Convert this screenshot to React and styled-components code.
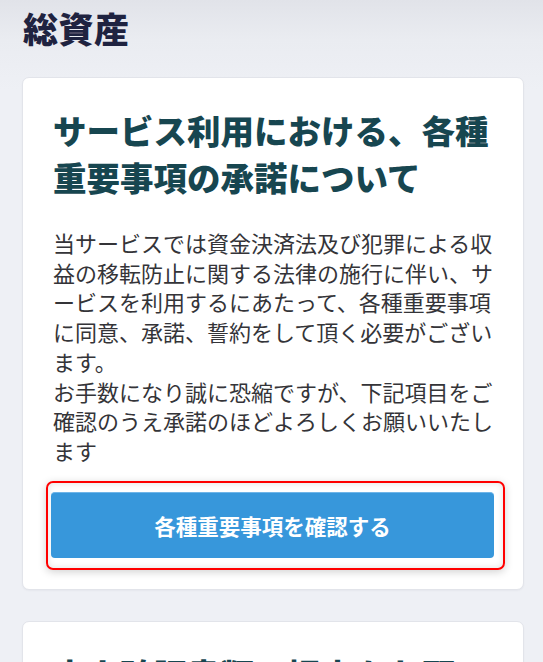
import React from 'react';
import styled, { createGlobalStyle } from 'styled-components';

const GlobalStyle = createGlobalStyle`
  html, body {
    margin: 0;
    padding: 0;
  }
  body {
    background: linear-gradient(#e1e3e9 0, #eaecf1 40px, #eef0f5 90px) #eef0f5;
    font-family: "Noto Sans CJK JP", "Noto Sans", sans-serif;
    min-height: 662px;
    overflow: hidden;
  }
`;

const Page = styled.div`
  padding: 7px 19px 0 22px;
`;

const PageTitle = styled.h1`
  margin: 0 0 28px 1px;
  font-size: 35px;
  line-height: 42px;
  font-weight: 900;
  color: #1f2340;
  letter-spacing: 0.5px;
`;

const Card = styled.section`
  background: #fff;
  border: 1px solid #e2e4ea;
  border-radius: 7px;
  box-shadow: 0 1px 2px rgba(30, 35, 60, 0.04);
  padding: 28px 30px 19px 30px;
  margin-bottom: 31px;
`;

const CardTitle = styled.h2`
  margin: 0 0 28px;
  font-size: 33.5px;
  line-height: 47px;
  font-weight: 900;
  color: #174650;
`;

const Body = styled.p`
  margin: 0 0 15px;
  font-size: 22px;
  line-height: 29.7px;
  color: #343438;
  white-space: pre-line;
`;

const FocusRing = styled.div`
  margin-left: -7px;
  margin-right: -12px;
  padding: 9px 9px 10px 3px;
  border: 2px solid #ff0000;
  border-radius: 7px;
  box-shadow: 0 2px 8px rgba(0, 0, 0, 0.18), inset 0 0 6px rgba(0, 0, 0, 0.12);
`;

const PrimaryButton = styled.button`
  display: flex;
  align-items: center;
  justify-content: center;
  width: 100%;
  height: 66px;
  border: none;
  border-top: 1px solid #6fb5e8;
  border-radius: 4px;
  background: #3797db;
  color: #fff;
  font-family: inherit;
  font-size: 21.5px;
  font-weight: 700;
  cursor: pointer;
`;

const bodyText = `当サービスでは資金決済法及び犯罪による収益の移転防止に関する法律の施行に伴い、サービスを利用するにあたって、各種重要事項に同意、承諾、誓約をして頂く必要がございます。
お手数になり誠に恐縮ですが、下記項目をご確認のうえ承諾のほどよろしくお願いいたします`;

export default function App() {
  return (
    <Page>
      <GlobalStyle />
      <PageTitle>総資産</PageTitle>
      <Card>
        <CardTitle>サービス利用における、各種重要事項の承諾について</CardTitle>
        <Body>{bodyText}</Body>
        <FocusRing>
          <PrimaryButton>各種重要事項を確認する</PrimaryButton>
        </FocusRing>
      </Card>
      <Card>
        <CardTitle>本人確認書類の提出をお願いします</CardTitle>
        <Body>本人確認が完了するまで、一部のサービスをご利用いただけません。</Body>
      </Card>
    </Page>
  );
}
